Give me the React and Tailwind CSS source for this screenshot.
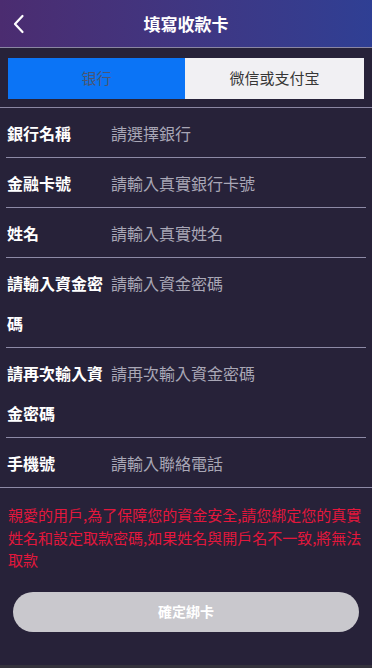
import React from "react";

const font = { fontFamily: '"Noto Sans CJK TC", "Noto Sans CJK SC", sans-serif' };

function Row({ label, placeholder }) {
  return (
    <div className="mx-[6px] flex border-b border-[#8d8aa6] pt-[5px] pb-[4px]">
      <div className="w-[100px] shrink-0 pl-[1px] text-[16px] leading-[40px] font-bold text-white">
        {label}
      </div>
      <div className="ml-[5px] text-[16px] leading-[40px] text-[#a9a7b6]">{placeholder}</div>
    </div>
  );
}

export default function App() {
  return (
    <div style={font} className="flex h-[668px] w-[372px] flex-col bg-[#272239]">
      <div className="relative flex h-[48px] shrink-0 items-center justify-center border-b border-[#8a86a2] bg-gradient-to-r from-[#4b2c70] to-[#2f3f94]">
        <svg className="absolute left-[12px] top-[14px]" width="14" height="20" viewBox="0 0 14 20">
          <path d="M10.5 2 L3 10 L10.5 18" fill="none" stroke="white" strokeWidth="2.2" strokeLinecap="round" strokeLinejoin="round" />
        </svg>
        <div className="text-[17px] font-bold text-white">填寫收款卡</div>
      </div>
      <div className="border-b border-[#8a86a2] px-[8px] pb-[8px] pt-[10px]">
        <div className="flex h-[41px]">
          <div className="flex w-[177px] items-center justify-center bg-[#0b74f6] text-[15px] text-[#4a5672]">
            银行
          </div>
          <div className="flex flex-1 items-center justify-center bg-[#f1f0f3] text-[15px] text-[#363636]">
            微信或支付宝
          </div>
        </div>
      </div>
      <div className="flex flex-col">
        <Row label="銀行名稱" placeholder="請選擇銀行" />
        <Row label="金融卡號" placeholder="請輸入真實銀行卡號" />
        <Row label="姓名" placeholder="請輸入真實姓名" />
        <Row label="請輸入資金密碼" placeholder="請輸入資金密碼" />
        <Row label="請再次輸入資金密碼" placeholder="請再次輸入資金密碼" />
        <div className="flex border-b border-[#8d8aa6] px-[6px] pt-[5px] pb-[4px]">
          <div className="w-[100px] shrink-0 pl-[1px] text-[16px] leading-[40px] font-bold text-white">
            手機號
          </div>
          <div className="ml-[5px] text-[16px] leading-[40px] text-[#a9a7b6]">請輸入聯絡電話</div>
        </div>
      </div>
      <div className="px-[8px] pt-[16px] text-[15px] leading-[22.5px] text-[#e3173c]">
        親愛的用戶,為了保障您的資金安全,請您綁定您的真實姓名和設定取款密碼,如果姓名與開戶名不一致,將無法取款
      </div>
      <div className="px-[13px] pt-[20px]">
        <div className="flex h-[40px] items-center justify-center rounded-full bg-[#c9c8cd] text-[14px] font-bold text-white">
          確定綁卡
        </div>
      </div>
      <div className="flex-1" />
      <div className="h-[3px] bg-[#34323c]" />
    </div>
  );
}
